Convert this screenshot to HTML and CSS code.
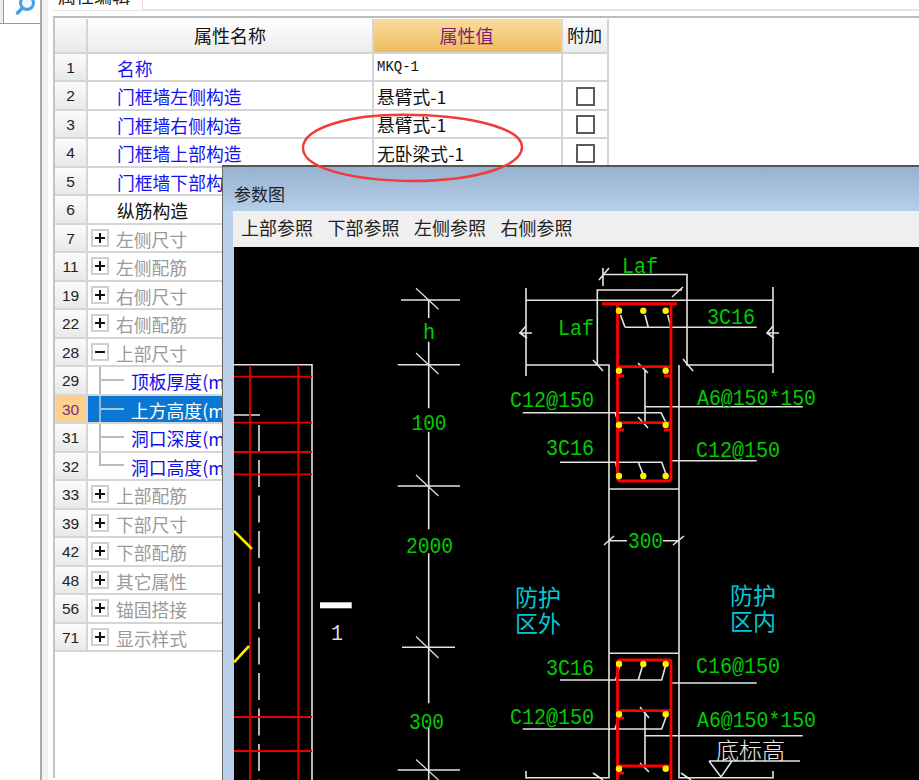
FILE: index.html
```html
<!DOCTYPE html>
<html lang="zh">
<head>
<meta charset="utf-8">
<title>参数图</title>
<link rel="stylesheet" href="styles.css">
</head>
<body>
<div class="page">
  <aside class="sidebar">
    <div class="tools">
      <span class="tool-stub"></span>
      <span class="tool-search">
        <svg class="search-icon" viewBox="0 0 24 16" width="24" height="16"><circle cx="14" cy="3" r="6.5" fill="#eaf5fd" stroke="#4a9fe0" stroke-width="3"/><path d="M9.5 8 L4.5 13" stroke="#4a9fe0" stroke-width="3.6" stroke-linecap="round"/></svg>
      </span>
    </div>
  </aside>
  <div class="gutter"></div>
  <main class="main">
    <div class="tabbar"><div class="tab"><span class="tab-text">属性编辑</span></div></div>
    <div class="panel">
      <div class="table">
        <div class="row head">
          <div class="num"></div>
          <div class="name-h">属性名称</div>
          <div class="value-h">属性值</div>
          <div class="extra-h">附加</div>
        </div>
        <div class="row"><div class="num">1</div><div class="name blue"><span class="lbl">名称</span></div><div class="value"><span class="mono">MKQ-1</span></div><div class="extra"></div></div>
        <div class="row"><div class="num">2</div><div class="name blue"><span class="lbl">门框墙左侧构造</span></div><div class="value">悬臂式-1</div><div class="extra"><span class="check"></span></div></div>
        <div class="row"><div class="num">3</div><div class="name blue"><span class="lbl">门框墙右侧构造</span></div><div class="value">悬臂式-1</div><div class="extra"><span class="check"></span></div></div>
        <div class="row"><div class="num">4</div><div class="name blue"><span class="lbl">门框墙上部构造</span></div><div class="value">无卧梁式-1</div><div class="extra"><span class="check"></span></div></div>
        <div class="row"><div class="num">5</div><div class="name blue"><span class="lbl">门框墙下部构造</span></div><div class="value"></div><div class="extra"></div></div>
        <div class="row"><div class="num">6</div><div class="name"><span class="lbl">纵筋构造</span></div><div class="value"></div><div class="extra"></div></div>
        <div class="row"><div class="num">7</div><div class="name grey"><span class="exp plus"></span><span class="lbl-t">左侧尺寸</span></div><div class="value"></div><div class="extra"></div></div>
        <div class="row"><div class="num">11</div><div class="name grey"><span class="exp plus"></span><span class="lbl-t">左侧配筋</span></div><div class="value"></div><div class="extra"></div></div>
        <div class="row"><div class="num">19</div><div class="name grey"><span class="exp plus"></span><span class="lbl-t">右侧尺寸</span></div><div class="value"></div><div class="extra"></div></div>
        <div class="row"><div class="num">22</div><div class="name grey"><span class="exp plus"></span><span class="lbl-t">右侧配筋</span></div><div class="value"></div><div class="extra"></div></div>
        <div class="row"><div class="num">28</div><div class="name grey"><span class="exp"></span><span class="lbl-t">上部尺寸</span></div><div class="value"></div><div class="extra"></div></div>
        <div class="row"><div class="num">29</div><div class="name blue-d"><span class="elbow"></span><span class="lbl-c">顶板厚度(mm)</span></div><div class="value"></div><div class="extra"></div></div>
        <div class="row selected"><div class="num">30</div><div class="name"><span class="elbow"></span><span class="lbl-c">上方高度(mm)</span></div><div class="value"></div><div class="extra"></div></div>
        <div class="row"><div class="num">31</div><div class="name blue-d"><span class="elbow"></span><span class="lbl-c">洞口深度(mm)</span></div><div class="value"></div><div class="extra"></div></div>
        <div class="row"><div class="num">32</div><div class="name blue-d"><span class="elbow last"></span><span class="lbl-c">洞口高度(mm)</span></div><div class="value"></div><div class="extra"></div></div>
        <div class="row"><div class="num">33</div><div class="name grey"><span class="exp plus"></span><span class="lbl-t">上部配筋</span></div><div class="value"></div><div class="extra"></div></div>
        <div class="row"><div class="num">39</div><div class="name grey"><span class="exp plus"></span><span class="lbl-t">下部尺寸</span></div><div class="value"></div><div class="extra"></div></div>
        <div class="row"><div class="num">42</div><div class="name grey"><span class="exp plus"></span><span class="lbl-t">下部配筋</span></div><div class="value"></div><div class="extra"></div></div>
        <div class="row"><div class="num">48</div><div class="name grey"><span class="exp plus"></span><span class="lbl-t">其它属性</span></div><div class="value"></div><div class="extra"></div></div>
        <div class="row"><div class="num">56</div><div class="name grey"><span class="exp plus"></span><span class="lbl-t">锚固搭接</span></div><div class="value"></div><div class="extra"></div></div>
        <div class="row"><div class="num">71</div><div class="name grey"><span class="exp plus"></span><span class="lbl-t">显示样式</span></div><div class="value"></div><div class="extra"></div></div>
      </div>
    </div>
  </main>
</div>

<section class="window">
  <header class="win-title">参数图</header>
  <div class="win-body">
    <nav class="win-menu"><span>上部参照</span><span>下部参照</span><span>左侧参照</span><span>右侧参照</span></nav>
    <svg class="cad" viewBox="234 247 685 533" width="685" height="533">
      <!-- left elevation -->
      <g class="w">
        <path d="M234 364.7H312V780M234 415H260"/>
        <path class="dash" d="M259 425V451.7M259 460V780"/>
      </g>
      <g class="r1">
        <path d="M250 365V780M298.3 365V780M234 376.7H312M234 422.7H312M234 452H312M234 474.3H312M234 717H312M234 751H312"/>
      </g>
      <path class="y" d="M234 531L252 549M234 662.3L249 646"/>
      <rect class="sec" x="320" y="602.3" width="31.7" height="6"/>
      <text class="t-w" x="331" y="640" textLength="12" lengthAdjust="spacingAndGlyphs">1</text>

      <!-- dimension column -->
      <g class="w">
        <path d="M428.7 300V318M428.7 341.7V408.3M428.7 431.7V529.3M428.7 553.3V703.3M428.7 726.7V780"/>
        <path d="M401 300H460M397.7 364.7H460M397.7 486H460M402 647.3H455M397.7 770H460"/>
        <path class="thin" d="M416 288.3L438.5 309.3M416 353L438.5 374M416 475L438.5 496M416 636.5L438.5 658M416 759.5L438.5 780"/>
      </g>
      <text class="t-g" x="423" y="339" textLength="12" lengthAdjust="spacingAndGlyphs">h</text>
      <text class="t-g" x="411.5" y="430" textLength="35" lengthAdjust="spacingAndGlyphs">100</text>
      <text class="t-g" x="406" y="553" textLength="47" lengthAdjust="spacingAndGlyphs">2000</text>
      <text class="t-g" x="409" y="729" textLength="35" lengthAdjust="spacingAndGlyphs">300</text>

      <!-- upper section -->
      <g class="w">
        <path d="M603 274.5H687V365H773M679 365V653.3M597.3 365V290H682M526 300.3H773M526 288V376M773 287V373M526 365H609V653.3M609 653.3H679M609 489H679"/>
        <path d="M603 268V286M599 280L609 268M672 297L683 287M593 360L603 371M683 359L693 371"/>
        <path d="M519 333H532M526 326L520 333L527 338M767 333H779M773 326L767 333L774 338"/>
        <path d="M625 327.3H756.7M620.5 315L625 327.3M645 315L648.3 327.3M667.7 315L671 327.3"/>
        <path d="M645 370V421.7M645 406.7H802.7M638 363L648 373M638 417L648 428"/>
        <path d="M522.7 412.7H661L666 422.7M615 412.7L618.5 422.7"/>
        <path d="M560 462.3H661.7L666 474M615.7 462.3L618 474M638.3 462.3L643 474"/>
        <path d="M671 460.7H756.7"/>
      </g>
      <g class="r2">
        <path class="rb" d="M602 303.7H677"/>
        <path d="M617.5 304V478Q617.5 481 620.5 481H668Q671 481 671 478V304"/>
        <path d="M617.5 366.7H671M617.5 422.7H671M617.5 376H624M664 376H671M617.5 430H624M664 430H671"/>
      </g>
      <g class="dots">
        <circle cx="619" cy="310.7" r="3.2"/><circle cx="643.3" cy="310.7" r="3.2"/><circle cx="665.7" cy="310.7" r="3.2"/>
        <circle cx="619" cy="370.7" r="3.2"/><circle cx="665.7" cy="370.7" r="3.2"/>
        <circle cx="619" cy="425" r="3.2"/><circle cx="665.7" cy="425" r="3.2"/>
        <circle cx="619" cy="476" r="3.2"/><circle cx="643.3" cy="476" r="3.2"/><circle cx="665.7" cy="476" r="3.2"/>
      </g>
      <text class="t-g" x="622" y="273" textLength="36" lengthAdjust="spacingAndGlyphs">Laf</text>
      <text class="t-g" x="558" y="335" textLength="36" lengthAdjust="spacingAndGlyphs">Laf</text>
      <text class="t-g" x="707" y="324" textLength="48" lengthAdjust="spacingAndGlyphs">3C16</text>
      <text class="t-g" x="510" y="407" textLength="84" lengthAdjust="spacingAndGlyphs">C12@150</text>
      <text class="t-g" x="697" y="405" textLength="119" lengthAdjust="spacingAndGlyphs">A6@150*150</text>
      <text class="t-g" x="546" y="455" textLength="48" lengthAdjust="spacingAndGlyphs">3C16</text>
      <text class="t-g" x="696" y="457" textLength="84" lengthAdjust="spacingAndGlyphs">C12@150</text>

      <!-- middle -->
      <g class="w">
        <path d="M609 540.7H627M663 540.7H679M604 545L614 536M673 545L684 536"/>
      </g>
      <text class="t-g" x="628" y="548" textLength="35" lengthAdjust="spacingAndGlyphs">300</text>
      <text class="t-c" x="515" y="606">防护</text>
      <text class="t-c" x="515" y="632">区外</text>
      <text class="t-c" x="730" y="604">防护</text>
      <text class="t-c" x="730" y="630">区内</text>

      <!-- lower section -->
      <g class="w">
        <path d="M609 653.3V777.7H526V771M679 653.3V777.7H773V771"/>
        <path d="M560 680H661.7L666 664M615.7 680L620 664M638.3 680L643 664"/>
        <path d="M671 683H756.7"/>
        <path d="M522.7 729H661.7L666 717M615 729L619 717"/>
        <path d="M645 711.7V766.7M645 735.7H802.7M640 707L649 718M640 763L649 772"/>
        <path d="M593 773L603 780M681 773L691 780"/>
        <path d="M709 761H800M709 761L721 777L732 761"/>
      </g>
      <g class="r2">
        <path d="M617.5 780V662.5Q617.5 660 620 660H668.5Q671 660 671 662.5V780"/>
        <path d="M617.5 710.7H671M617.5 766H671M617.5 718H624M617.5 773H624"/>
      </g>
      <g class="dots">
        <circle cx="619" cy="664" r="3.2"/><circle cx="643.3" cy="664" r="3.2"/><circle cx="665.7" cy="664" r="3.2"/>
        <circle cx="619" cy="714.3" r="3.2"/><circle cx="665.7" cy="714.3" r="3.2"/>
        <circle cx="619" cy="768.7" r="3.2"/><circle cx="665.7" cy="768.7" r="3.2"/>
      </g>
      <text class="t-g" x="546" y="675" textLength="48" lengthAdjust="spacingAndGlyphs">3C16</text>
      <text class="t-g" x="696" y="673" textLength="84" lengthAdjust="spacingAndGlyphs">C16@150</text>
      <text class="t-g" x="510" y="724" textLength="84" lengthAdjust="spacingAndGlyphs">C12@150</text>
      <text class="t-g" x="697" y="727" textLength="119" lengthAdjust="spacingAndGlyphs">A6@150*150</text>
      <text class="t-b" x="716" y="759">底标高</text>
    </svg>
  </div>
</section>

<svg class="markup" viewBox="0 0 919 780" width="919" height="780">
  <path d="M415 115C350 113 303 128 303 148C303 168 350 180 410 181C480 181 522 165 522 147C522 128 470 116 415 115Z"/>
</svg>
</body>
</html>
```

FILE: styles.css
```css
html, body { margin: 0; padding: 0; height: 100%; background: #fff; overflow: hidden; }
body { font-family: "Noto Sans CJK SC", "Liberation Sans", sans-serif; color: #111; }

.page { display: flex; width: 919px; height: 780px; overflow: hidden; }

.sidebar { width: 40px; flex: none; border-right: 2px solid #a9a9a9; box-sizing: content-box; background: #fff; }
.tools { display: flex; height: 23px; border-bottom: 1px solid #999; }
.tool-stub { width: 3px; background: #ececec; border-right: 1px solid #999; }
.tool-search { flex: 1; overflow: hidden; display: block; }
.search-icon { display: block; margin-left: 9px; }

.gutter { width: 6px; flex: none; background: #f1f1f1; }

.main { flex: 1; padding-left: 5px; min-width: 0; }

.tabbar { height: 16px; box-sizing: border-box; overflow: hidden; background: linear-gradient(#fff 0 9px, #e4e4e4 9px 11px, #fff 11px); }
.tab { width: 89px; height: 10px; background: #fff; border-right: 1px solid #ddd; overflow: hidden; }
.tab-text { display: block; margin: -15px 0 0 5px; font-size: 18px; line-height: 20px; color: #222; }

.panel { border-top: 2px solid #bdbdbd; border-left: 2px solid #c4c4c4; padding-top: 1px; height: 762px; box-sizing: border-box; }

.table { width: 554px; }
.row { display: grid; grid-template-columns: 33px 286px 189px 46px; height: 28.5px; font-size: 17.8px; line-height: 26px; }
.row > div { box-sizing: border-box; border-bottom: 2px solid #d5d5d5; border-right: 2px solid #d5d5d5; white-space: nowrap; overflow: hidden; display: flex; align-items: center; }
.row.head { height: 34.5px; font-size: 18px; }

.num { justify-content: center; background: linear-gradient(#fbfbfb, #e9e9e9); font-family: "Liberation Sans", sans-serif; font-size: 15.5px; color: #222; padding-top: 2px; }
.head .num { padding-top: 0; }
.name-h { justify-content: center; background: linear-gradient(#fff, #ececec); }
.value-h { justify-content: center; background: linear-gradient(#fbdd9f, #eebb5e); color: #7d1a7d; padding-right: 2px; }
.extra-h { justify-content: center; background: linear-gradient(#fbfbfb, #ececec); font-size: 17.6px; padding-right: 1px; }

.value { padding: 1px 0 0 3px; }
.extra { justify-content: center; }
.lbl { margin: 2px 0 0 29px; }
.lbl-t { margin: 2px 0 0 7px; }
.lbl-c { margin: 2px 0 0 7px; }
.blue { color: #1414f0; }
.blue-d { color: #1010e6; }
.grey { color: #9a9a9a; }
.mono { font-family: "Liberation Mono", monospace; font-size: 14px; }
.check { width: 19px; height: 19px; margin-top: 2px; box-sizing: border-box; border: 2px solid #5a5a5a; background: #fff; }

.exp { width: 18px; height: 18px; box-sizing: border-box; margin-left: 3px; border: 2px solid #cfcfcf; flex: none;
  background: linear-gradient(#111, #111) center / 10px 2px no-repeat, #fff; }
.exp.plus { background: linear-gradient(#111, #111) center / 10px 2px no-repeat, linear-gradient(#111, #111) center / 2px 10px no-repeat, #fff; }

.elbow { width: 25px; height: 100%; margin-left: 11px; flex: none; box-sizing: border-box; border-left: 2px solid #bbb;
  background: linear-gradient(#bbb, #bbb) center / 100% 2px no-repeat; }
.elbow.last { height: 50%; align-self: flex-start; background: none; border-bottom: 2px solid #bbb; }

.selected .num { background: #fdd08c; color: #7a2a80; }
.selected .name { background: #0a78d2; color: #fff; }
.selected .elbow { border-left-color: #8fb6d9; background-image: linear-gradient(#a6c6e2, #a6c6e2); }

/* floating window */
.window { position: absolute; left: 222px; top: 165px; width: 697px; height: 615px; box-sizing: border-box; border-top: 2px solid #555; border-left: 1px solid #666; background: #b9d0e8; overflow: hidden; }
.win-title { height: 44px; box-sizing: border-box; padding: 15px 0 0 11px; font-size: 17px; line-height: 24px; color: #222; background: linear-gradient(#97b2d0, #b6cfe9); }
.win-body { margin-left: 10px; }
.win-menu { display: flex; gap: 14px; height: 36px; box-sizing: border-box; padding: 4px 0 0 8px; background: #efefef; font-size: 18px; line-height: 24px; color: #222; }
.win-menu span { width: 72.5px; white-space: nowrap; }

.cad { display: block; margin-left: 1px; background: #000; }
.cad path { fill: none; }
.cad .w path { stroke: #e4e4e4; stroke-width: 1.6; }
.cad .w .thin { stroke-width: 1.2; }
.cad .dash { stroke-dasharray: 27 8.5; }
.cad .r1 path { stroke: #e60000; stroke-width: 1.8; }
.cad .r2 path { stroke: #ff0000; stroke-width: 2.8; }
.cad .r2 .rb { stroke-width: 3; }
.cad .y { stroke: #ffee00; stroke-width: 2.6; }
.cad .sec { fill: #fff; }
.cad .dots circle { fill: #ffef00; }
.t-g { fill: #00cc00; font-family: "Liberation Mono", monospace; font-size: 22px; }
.t-w { fill: #dcdcdc; font-family: "Liberation Mono", monospace; font-size: 22px; }
.t-c { fill: #00c8d8; font-family: "Noto Sans CJK SC", sans-serif; font-size: 23px; }
.t-b { fill: #e8e8e8; font-family: "Noto Sans CJK SC", sans-serif; font-size: 23px; font-weight: 300; }

.markup { position: absolute; left: 0; top: 0; pointer-events: none; }
.markup path { fill: none; stroke: #f23a3a; stroke-width: 2.4; }
```
